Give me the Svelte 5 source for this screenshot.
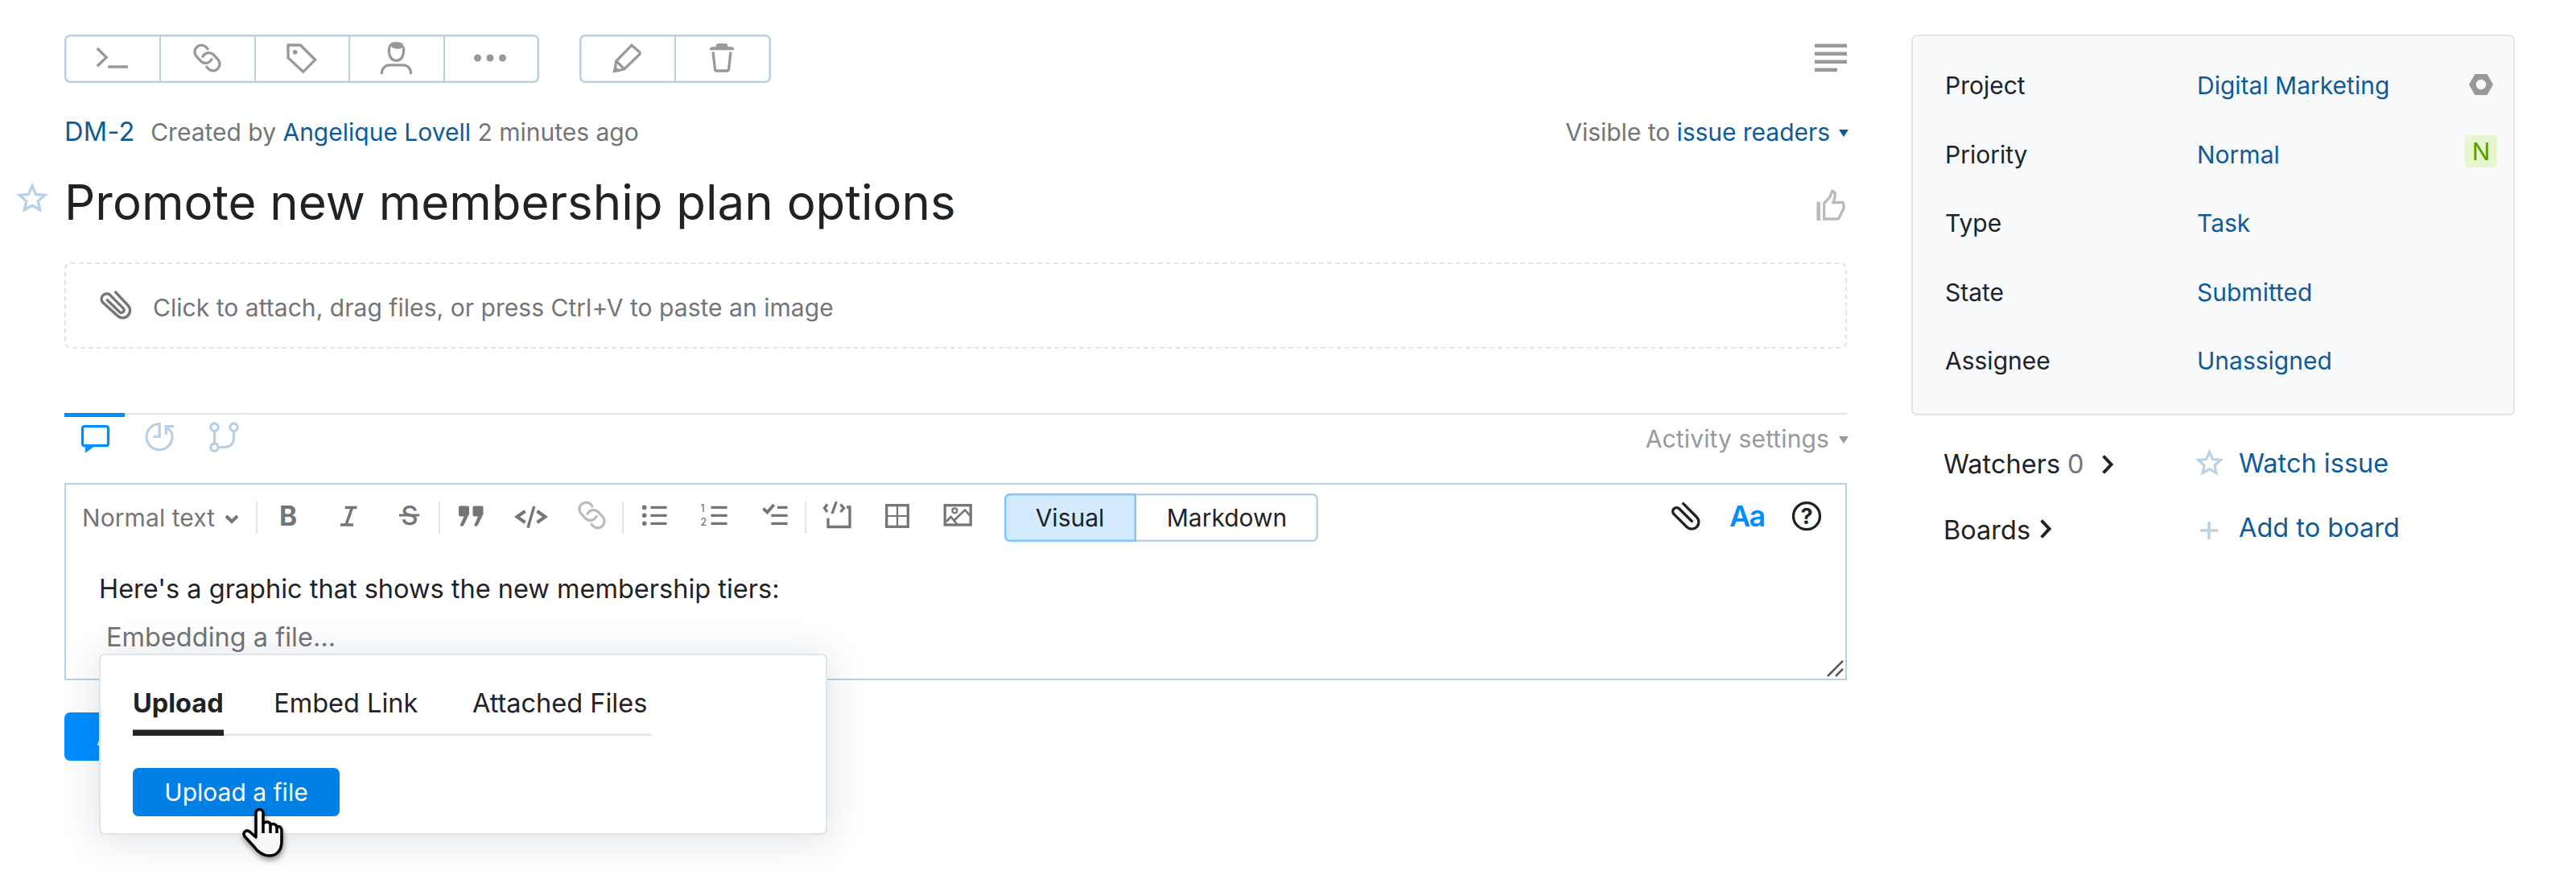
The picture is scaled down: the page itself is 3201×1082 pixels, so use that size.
<script lang="ts">
  // Points of a five-pointed star, for the outlined star icons
  function star(cx: number, cy: number, outer: number, inner: number) {
    const points: string[] = [];
    for (let i = 0; i < 10; i++) {
      const r = i % 2 === 0 ? outer : inner;
      const a = (Math.PI / 5) * i - Math.PI / 2;
      points.push(`${(cx + r * Math.cos(a)).toFixed(2)},${(cy + r * Math.sin(a)).toFixed(2)}`);
    }
    return points.join(' ');
  }

  const halfLink = 'M21.8 8.9L19.2 5.6A8.3 8.3 0 0 0 7.4 17.4L12.8 23.2A8.3 8.3 0 0 0 26.4 19.4';
  const solid = 'fill="currentColor" stroke="none"';

  // All icons are drawn on a 40x40 grid
  const icons: Record<string, string> = {
    command: '<path d="M1.7 7L13.3 18.3L1.7 29.3M15.3 30H40"/>',
    link: `<path d="${halfLink}"/><path d="${halfLink}" transform="rotate(180 20.5 19)"/>`,
    tag: `<path d="M4 3H19.3L37.7 21.3L22.7 36.3L4 18.7Z"/><circle cx="12.7" cy="11.7" r="2.8" ${solid}/>`,
    user: `<path d="M2.2 39C2.2 32 6.5 27.8 12.5 27.8H28.5C34.8 27.8 38.6 32 38.6 39M11.6 7C10.8 14 13 22.3 20.5 22.3C28 22.3 30.2 14 29.4 7"/><path ${solid} d="M10 9C10 2 14 -1 20 -1C24 -1 26 0 29 1.2L28 3C31 4 31.3 7 31 10L28.5 6.3C24 8.5 17 8.5 14 4.5C13 6 12.8 8 12.8 10Z"/>`,
    more: `<g ${solid}><circle cx="4.5" cy="19" r="4.5"/><circle cx="20" cy="19" r="4.5"/><circle cx="35.5" cy="19" r="4.5"/></g>`,
    edit: '<path d="M26 3.2L35.6 11.6Q36.8 13 35.6 14.6L16.5 33L4.6 35.4L6.8 22.8Z"/><path d="M8 24L15.6 31.6M5 31L9 35" />',
    trash: `<path d="M9 11.5L11.5 33Q11.7 35 13.5 35H26.5Q28.3 35 28.5 33L31 11.5"/><path ${solid} d="M5 9.3V7.2Q5.5 5.5 8 5.3L12.5 5Q13 1 15.5 1H24.5Q27 1 27.5 5L32 5.3Q34.5 5.5 35 7.2V9.3Z"/>`,
    text: '<path stroke-width="4.6" d="M0 3.8H40M0 13.8H40M0 23.8H40M0 33.8H28"/>',
    thumb: '<path d="M11.7 37V17.5L19 9.7L21.7 2.3Q26.5 3.5 25.3 9L23 16.5H34.5Q36.3 17 36 20V24L30 36Q29.5 37 28.5 37Z"/><path stroke-width="4.6" d="M4.7 15.7V39"/>',
    star: `<polygon points="${star(20, 20.5, 16.6, 7.6)}"/>`,
    attach: '<path d="M19.7 3L35.7 20A9 9 0 0 1 23 33.3L4.3 16.3A6.6 6.6 0 0 1 13.3 7L30.3 24A3.3 3.3 0 0 1 25.7 28.7L9.3 12.7"/>',
    clip: '<path d="M15.7 3.7L33.5 21.5A8.7 8.7 0 0 1 21.2 33.8L5 17.7A4.7 4.7 0 0 1 11.7 11L28.3 27.5"/>',
    comment: `<rect x="4.5" y="4.7" width="32" height="24" rx="2.5"/><path ${solid} d="M7.8 28V37.7L18.5 30Z"/>`,
    history: '<path d="M20.2 0V17.3H12.5M20.2 1.7A16 16 0 1 0 35 12L29 5M28.2 14.7V4.7H38.2"/>',
    branch: '<circle cx="8.5" cy="5.7" r="4.7"/><circle cx="32.5" cy="5.7" r="4.7"/><circle cx="8.5" cy="30.7" r="4.7"/><path d="M8.5 10.3V26M32.5 10.3V18Q32.5 30.7 19 30.7H13"/>',
    bold: '<text x="9" y="32" font-size="33.5" font-weight="700" fill="currentColor" stroke="none">B</text>',
    italic: '<path stroke-width="3.6" d="M15.7 9.5H30.5M10 31H26M24.6 9.5L17 31"/>',
    strike: '<text x="10.2" y="30.5" font-size="33" font-weight="500" fill="currentColor" stroke="none">S</text><path stroke-width="3" d="M8 19H33"/>',
    quote: `<g ${solid}><path id="q" d="M5 9.6q0-2 2-2h9q2 0 2 2v8L11.5 31q-1 1.8-2.5 1.8q-2.5 0-2-2L11.5 20.5h-4.5q-2 0-2-2z"/><use href="#q" x="17.5"/></g>`,
    code: '<path stroke-width="4" d="M12.5 14L2.5 21L12.5 28M27.5 14L37.5 21L27.5 28"/><path stroke-width="3.4" d="M23.7 8L16 34.7"/>',
    bullets: `<g ${solid}><circle cx="7.7" cy="9.4" r="2.8"/><circle cx="7.7" cy="19.2" r="2.8"/><circle cx="7.7" cy="29.3" r="2.8"/></g><path d="M15.4 9.4H35.6M15.4 19.3H35.6M15.4 29.3H35.6"/>`,
    numbers: `<g ${solid} font-size="12.4" font-weight="500"><text x="2.6" y="14.7">1</text><text x="2.4" y="32.3">2</text></g><path d="M15.4 9.4H35.6M15.4 19.3H35.6M15.4 29.3H35.6"/>`,
    checks: '<path d="M23 9.4H35.6M15.4 19.3H35.6M15.4 29.3H35.6"/><path stroke-width="3.8" d="M5.4 10.6L10.4 15.4L18.6 6"/>',
    codeblock: '<path d="M8 5.5L4.5 10.3L8 15M24.5 5.5L28.5 10.3L24.5 15M19.3 2.3L14 17M32 9H36V33.5H9V22.7"/>',
    table: '<rect x="6.7" y="6.7" width="26.6" height="26.6"/><path stroke-width="2.2" d="M20 6V34M6 20H34"/>',
    image: '<rect x="4.2" y="6.7" width="32" height="24.3"/><path stroke-width="2.6" d="M6 27L11.5 21L20 31M15.6 25.5L29 12.5L35.5 19.5"/><circle cx="16.3" cy="13.3" r="3" stroke-width="2.2"/>',
    font: '<text x="-1" y="33" font-size="36" font-weight="600" letter-spacing="-1.6" fill="currentColor" stroke="none">Aa</text>',
    help: '<circle cx="20" cy="20.2" r="16.5"/><text x="20" y="29.6" text-anchor="middle" font-size="27" font-weight="700" fill="currentColor" stroke="none">?</text>',
    plus: '<path d="M9 20H31M20 9V31"/>',
    hex: `<path ${solid} fill-rule="evenodd" d="M12.4 7H27.6L35 20L27.6 33H12.4L5 20ZM20 13.8A6.2 6.2 0 1 0 20 26.2A6.2 6.2 0 1 0 20 13.8Z"/>`,
    chevron: '<path stroke-width="4" d="M13.7 9.5L23.5 20L13.7 30.5"/>'
  };

  const issueActions = ['command', 'link', 'tag', 'user', 'more'];
  const editActions = ['edit', 'trash'];
  const formatGroups = [
    ['bold', 'italic', 'strike'],
    ['quote', 'code', 'link'],
    ['bullets', 'numbers', 'checks'],
    ['codeblock', 'table', 'image']
  ];
  const fields = [
    { name: 'Project', value: 'Digital Marketing' },
    { name: 'Priority', value: 'Normal' },
    { name: 'Type', value: 'Task' },
    { name: 'State', value: 'Submitted' },
    { name: 'Assignee', value: 'Unassigned' }
  ];
  const embedTabs = ['Upload', 'Embed Link', 'Attached Files'];

  let mode = $state('Visual');
  let embedTab = $state('Upload');
</script>

{#snippet icon(name: string)}
  <svg class="icon" viewBox="0 0 40 40" aria-hidden="true">{@html icons[name]}</svg>
{/snippet}

<div class="page">
  <main>
    <div class="toolbar">
      <div class="button-group">
        {#each issueActions as name}
          <button aria-label={name}>{@render icon(name)}</button>
        {/each}
      </div>
      <div class="button-group">
        {#each editActions as name}
          <button aria-label={name}>{@render icon(name)}</button>
        {/each}
      </div>
      <div class="view-toggle">{@render icon('text')}</div>
    </div>

    <div class="meta">
      <span class="issue-id">DM-2</span>
      <span class="created">Created by <a href="#user">Angelique Lovell</a> 2 minutes ago</span>
      <span class="visibility">Visible to <a href="#visibility">issue readers</a><i class="caret"></i></span>
    </div>

    <div class="title-row">
      <span class="favorite">{@render icon('star')}</span>
      <h1>Promote new membership plan options</h1>
      <span class="vote">{@render icon('thumb')}</span>
    </div>

    <div class="dropzone">
      {@render icon('attach')}
      <span>Click to attach, drag files, or press Ctrl+V to paste an image</span>
    </div>

    <div class="activity">
      <span class="tab active">{@render icon('comment')}</span>
      <span class="tab">{@render icon('history')}</span>
      <span class="tab">{@render icon('branch')}</span>
      <span class="activity-settings">Activity settings<i class="caret"></i></span>
    </div>

    <section class="editor">
      <div class="format-bar">
        <span class="block-type">
          Normal text
          <svg width="18" height="12" viewBox="0 0 18 12"><path d="M2 2L9 9L16 2" /></svg>
        </span>
        {#each formatGroups as group}
          <div class="format-group">
            {#each group as name}
              <button class:disabled={name === 'link'} aria-label={name}>{@render icon(name)}</button>
            {/each}
          </div>
        {/each}
        <div class="switch">
          {#each ['Visual', 'Markdown'] as option}
            <button class:selected={mode === option} onclick={() => (mode = option)}>{option}</button>
          {/each}
        </div>
        <div class="editor-tools">
          <button aria-label="Attach">{@render icon('clip')}</button>
          <button class="accent" aria-label="Formatting">{@render icon('font')}</button>
          <button aria-label="Help">{@render icon('help')}</button>
        </div>
      </div>
      <div class="content">
        <p>Here's a graphic that shows the new membership tiers:</p>
        <p class="placeholder">Embedding a file…</p>
      </div>
      <svg class="resize" width="22" height="22" viewBox="0 0 22 22"><path d="M1 20L20 1M11 20L20 11" /></svg>

      <div class="popup">
        <div class="embed-tabs">
          {#each embedTabs as tab}
            <button class:current={embedTab === tab} onclick={() => (embedTab = tab)}>{tab}</button>
          {/each}
        </div>
        <button class="upload">Upload a file</button>
        <svg class="pointer" width="54" height="66" viewBox="0 0 54 66">
          <path
            d="M18 31V7C18 1 27 1 27 7V20C31 16.500 36 18 36 22C39 19.500 43.500 20.500 44 24.500C47.500 22.500 50 25 50 29V42C50 52 45 60 35 60C26 60 20 55 15 48L4 36C1 31 6 27 10 30L18 37Z"
          />
          <path class="knuckles" d="M27 19V32M36 22V32M44 24V32" />
        </svg>
      </div>
    </section>

    <button class="submit">Add comment</button>
  </main>

  <aside>
    <div class="fields">
      {#each fields as field}
        <div class="field">
          <span class="name">{field.name}</span>
          <a href="#field">{field.value}</a>
          {#if field.name === 'Project'}
            <span class="marker">{@render icon('hex')}</span>
          {:else if field.name === 'Priority'}
            <span class="marker badge">N</span>
          {/if}
        </div>
      {/each}
    </div>
    <div class="side-row watchers">
      <span class="side-label">Watchers <em>0</em><i>{@render icon('chevron')}</i></span>
      <span class="side-icon">{@render icon('star')}</span>
      <a href="#watch">Watch issue</a>
    </div>
    <div class="side-row boards">
      <span class="side-label">Boards<i>{@render icon('chevron')}</i></span>
      <span class="side-icon">{@render icon('plus')}</span>
      <a href="#board">Add to board</a>
    </div>
  </aside>
</div>

<style>
  :global(body) {
    background: #fff;
  }

  .page {
    display: flex;
    box-sizing: border-box;
    width: 3201px;
    height: 1082px;
    padding: 43px 76px 0 80px;
    overflow: hidden;
    font-family: Inter, 'Liberation Sans', sans-serif;
    font-size: 30px;
    line-height: 40px;
    color: #1f2326;
  }

  button {
    display: flex;
    align-items: center;
    justify-content: center;
    margin: 0;
    padding: 0;
    border: 0;
    background: none;
    font: inherit;
    color: inherit;
  }

  a {
    color: #0f5b99;
    text-decoration: none;
  }

  .icon {
    display: block;
    flex: none;
    width: 40px;
    height: 40px;
    overflow: visible;
    fill: none;
    stroke: currentColor;
    stroke-width: 3.3;
  }

  main {
    width: 2215px;
    flex: none;
  }

  .toolbar {
    display: flex;
    gap: 50px;
    height: 60px;
    color: #999;
  }

  .button-group {
    display: flex;
    padding: 0 2px 0 0.5px;
    border-radius: 7px;
    box-shadow: inset 0 0 0 2.5px #b8d1e5;
  }

  .button-group button {
    width: 117.5px;
  }

  .button-group button + button {
    box-shadow: inset 2px 0 #b8d1e5;
  }

  .view-toggle {
    margin: 10px 0 0 auto;
  }

  .meta {
    display: flex;
    align-items: baseline;
    margin-top: 41px;
    height: 40px;
    color: #737577;
  }

  .issue-id {
    margin-right: 19.5px;
    font-size: 32.5px;
    letter-spacing: 0.3px;
    color: #0f5b99;
  }

  .visibility {
    margin-left: auto;
    margin-right: -2px;
    letter-spacing: -0.04px;
  }

  .caret {
    display: inline-block;
    margin-left: 11px;
    vertical-align: 5px;
    border: 6.5px solid transparent;
    border-top: 9px solid #0f5b99;
    border-bottom: 0;
  }

  .title-row {
    display: flex;
    align-items: center;
    margin: 31px 0 0 -60px;
    height: 72px;
  }

  .favorite {
    width: 60px;
    margin-top: -9px;
    color: #b8d1e5;
  }

  h1 {
    margin: 0;
    font-size: 60px;
    font-weight: 400;
    line-height: 72px;
  }

  .vote {
    margin: 8px 0 0 auto;
    color: #b9bbbd;
  }

  .dropzone {
    display: flex;
    align-items: center;
    box-sizing: border-box;
    margin-top: 39px;
    height: 107px;
    padding: 4px 0 0 41px;
    border: 2px dashed #dfe5eb;
    border-radius: 8px;
    letter-spacing: 0.04px;
    color: #737577;
  }

  .dropzone .icon {
    margin: -5px 27px 0 0;
  }

  .activity {
    display: flex;
    gap: 5px;
    box-sizing: border-box;
    margin-top: 80px;
    height: 87px;
    border-top: 2px solid #dfe5eb;
    color: #b8d1e5;
  }

  .tab {
    display: flex;
    justify-content: center;
    box-sizing: border-box;
    width: 75px;
    height: 60px;
    margin-top: -2px;
    padding-top: 12px;
  }

  .tab.active {
    padding-top: 7px;
    border-top: 5px solid #008eff;
    color: #008eff;
  }

  .activity-settings {
    margin: 10px -2px 0 auto;
    letter-spacing: 0.12px;
    color: #999;
  }

  .activity-settings .caret {
    margin-left: 12px;
    border-top-color: #999;
  }

  .editor {
    position: relative;
    box-sizing: border-box;
    height: 245px;
    border: 2px solid #b8d1e5;
  }

  .format-bar {
    display: flex;
    align-items: center;
    height: 82px;
    padding: 0 10.5px 0 20px;
    color: #737577;
  }

  .block-type {
    display: flex;
    align-items: center;
    gap: 12px;
    box-sizing: border-box;
    width: 216px;
    letter-spacing: 0.08px;
  }

  .block-type svg {
    fill: none;
    stroke: currentColor;
    stroke-width: 4;
    margin-top: 3px;
  }

  .format-group {
    display: flex;
    box-sizing: border-box;
    height: 40px;
    border-left: 2.5px solid #dfe5eb;
  }

  .format-group + .format-group {
    padding-left: 0.5px;
  }

  .format-group button {
    width: 75px;
    padding-bottom: 4px;
  }

  .format-group .disabled {
    color: #bbb;
  }

  .switch {
    display: flex;
    margin-left: 20px;
    width: 390px;
    height: 60px;
    border-radius: 7px;
    box-shadow: inset 0 0 0 2.5px #b8d1e5;
    color: #1f2326;
  }

  .switch button {
    flex: 1;
  }

  .switch .selected {
    flex: none;
    width: 164px;
    border-radius: 7px 0 0 7px;
    background: #d4ebff;
    box-shadow: inset 0 0 0 2.5px #80c6ff;
  }

  .editor-tools {
    display: flex;
    margin: -4px 0 0 auto;
    color: #1f2326;
  }

  .editor-tools button {
    width: 75px;
  }

  .editor-tools .accent {
    color: #008eff;
  }

  .content {
    padding: 28px 43px 0 41px;
    font-size: 32.5px;
  }

  .content p {
    margin: 0 0 20px;
  }

  .content .placeholder {
    padding-left: 9px;
    color: #737577;
  }

  .resize {
    position: absolute;
    right: 1px;
    bottom: 1px;
    stroke: #555;
    stroke-width: 2.5;
  }

  .popup {
    position: absolute;
    left: 41px;
    top: 210px;
    z-index: 2;
    box-sizing: border-box;
    width: 905px;
    height: 225px;
    padding: 40px 40px 0;
    border: 2px solid #dfe5eb;
    border-radius: 7px;
    background: #fff;
    box-shadow: 0 5px 50px rgba(0, 42, 76, 0.15);
    font-size: 32.5px;
  }

  .embed-tabs {
    display: flex;
    gap: 62.5px;
    width: 645px;
    height: 60px;
    box-shadow: inset 0 -2.5px #dfe5eb;
  }

  .embed-tabs button {
    align-items: flex-start;
    height: 60px;
  }

  .embed-tabs button:last-child {
    margin-left: 5px;
  }

  .embed-tabs .current {
    box-shadow: inset 0 -7.5px #1f2326;
    font-weight: 700;
  }

  .upload {
    width: 257px;
    height: 60px;
    margin-top: 40px;
    border-radius: 7px;
    background: #0080e5;
    font-size: 30px;
    color: #fff;
  }

  .pointer {
    position: absolute;
    left: 175px;
    top: 189px;
    overflow: visible;
    fill: #f8f8f8;
    stroke: #000;
    stroke-width: 3.5;
    stroke-linejoin: round;
    filter: drop-shadow(1px 4px 3px rgba(0, 0, 0, 0.4));
  }

  .knuckles {
    fill: none;
  }

  .submit {
    margin-top: 40px;
    height: 60px;
    padding: 0 40px;
    border-radius: 7px;
    background: #008eff;
    color: #fff;
  }

  aside {
    width: 750px;
    margin-left: 80px;
  }

  .fields {
    box-sizing: border-box;
    height: 473px;
    padding: 41px 20px 0 40px;
    border: 2px solid #dfe5eb;
    border-radius: 7px;
    background: #f7f9fa;
  }

  .field {
    display: flex;
    height: 85.5px;
  }

  .name {
    width: 313px;
  }

  .marker {
    margin-left: auto;
    margin-top: -1px;
    color: #999;
  }

  .badge {
    width: 40px;
    height: 40px;
    margin-top: -4px;
    border-radius: 5px;
    background: #e6f6cf;
    text-align: center;
    color: #4da400;
  }

  .side-row {
    display: flex;
    margin-top: 40px;
    height: 40px;
    padding-left: 40px;
    font-size: 32.5px;
  }

  .side-label {
    display: flex;
    width: 310px;
    padding-top: 1px;
  }

  .side-label em {
    margin-left: 9px;
    font-style: normal;
    color: #737577;
  }

  .side-label i {
    margin-left: 10px;
  }

  .side-icon {
    width: 57px;
    color: #b8d1e5;
  }

  .side-icon .icon {
    stroke-width: 3.5;
  }

  .watchers .side-icon .icon {
    width: 35px;
    height: 35px;
    margin: 2px 0 0 2.5px;
  }

  .boards .side-label {
    padding-top: 3px;
  }

  .boards .side-label i {
    margin: -2px 0 0;
  }

  .boards .side-icon {
    padding-top: 3px;
  }
</style>
